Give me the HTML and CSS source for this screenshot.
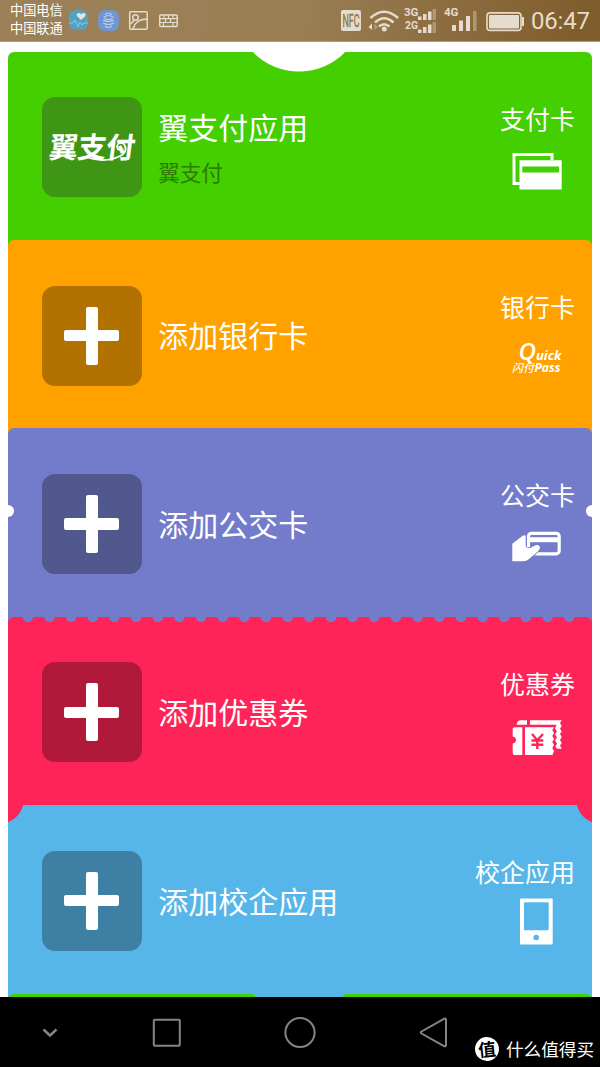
FILE: index.html
```html
<!DOCTYPE html>
<html lang="zh-CN">
<head>
    <meta charset="UTF-8">
    <meta name="viewport" content="width=device-width, initial-scale=1.0">
    <title>翼支付</title>
    <link rel="stylesheet" href="styles.css">
</head>
<body>
    <header class="status-bar">
        <div class="carriers">
            <span>中国电信</span>
            <span>中国联通</span>
        </div>
        <svg class="status-left" width="112" height="24" viewBox="0 0 112 24">
            <rect x="2" y="2" width="19" height="20" rx="7" fill="#51a3c4"/>
            <path d="M14 12 L10 8 Q9 5 12 5 Q14 5 14 6.500 Q15.500 4.500 17 5 Q20 6 17.500 9 Z" fill="#e9e5d8"/>
            <path d="M2 15 H6 L8 12 L11 19 L13 14 L15 17 L17 15 H21" fill="none" stroke="#93c4dd"/>
            <rect x="31" y="2" width="21" height="21" rx="7" fill="#7096d0"/>
            <path d="M38 6.500 Q41.500 4 45 6.500 M36.500 9.500 Q41.500 5.500 46.500 9.500 M36 12 Q41.500 15 47 12 M36 15 Q41.500 18 47 15 M38 18 Q41.500 21 45 18 M37.500 10.500 Q41.500 13 45.500 10.500" fill="none" stroke="#c1cce0" stroke-width="1.100"/>
            <g fill="none" stroke="#e5dccd" stroke-width="1.500">
                <rect x="62.700" y="3.700" width="17.500" height="17.500" rx="1"/>
                <circle cx="68.500" cy="9.500" r="2.800"/>
                <path d="M66 21 Q68 11.500 80 11 M67.500 12 L63.500 16"/>
                <rect x="92.700" y="7" width="17.500" height="11.500" rx="1"/>
                <path d="M93 10.700 H110 M93 14.500 H110 M97 7 V10.500 M101.500 7 V10.500 M106 7 V10.500 M98.500 11 V14 M103.500 11 V14 M96.500 15 V18 M106 15 V18" stroke-width="1.200"/>
            </g>
        </svg>
        <svg class="status-right" width="184" height="34" viewBox="0 0 184 34">
            <rect x="0" y="6" width="20" height="21" rx="2" fill="#e5dccd"/>
            <text class="nfc" x="1.500" y="22.500" textLength="17" lengthAdjust="spacingAndGlyphs">NFC</text>
            <g fill="none" stroke="#e5dccd" stroke-width="2.600">
                <path d="M29.500 14 Q43 1.500 57 14 M34 18.500 Q43 10 52.500 18.500 M38 22.500 Q43 18 48.500 22.500"/>
            </g>
            <circle cx="43.300" cy="25" r="2.500" fill="#e5dccd"/>
            <path d="M31 19.500 V26 L27.500 23 Z" fill="#e5dccd"/>
            <path d="M33.500 20 L37 23 L33.500 26 Z" fill="#b6a283"/>
            <g fill="#e5dccd">
                <text class="net" x="63" y="12">3G</text>
                <text class="net" x="64" y="25" textLength="13" lengthAdjust="spacingAndGlyphs">2G</text>
                <path d="M77 12.500h3.500v3.500h-3.500z M82 10h3.500v6h-3.500z M87 7.500h3.500v8.500h-3.500z M77 25.500h3.500v3.500h-3.500z M82 23h3.500v6h-3.500z M87 20.500h3.500v8.500h-3.500z"/>
                <text class="net" x="103" y="12">4G</text>
                <path d="M111 21h4v6h-4z M118 16.500h4v10.500h-4z M125 12h4v15h-4z"/>
            </g>
            <path d="M91.500 5h3.500v11h-3.500z M91.500 18h3.500v11h-3.500z M132 7h3.500v20h-3.500z" fill="#b09774"/>
            <rect x="146" y="8.900" width="34" height="17.500" rx="3" fill="none" stroke="#e5dccd" stroke-width="1.600"/>
            <rect x="148" y="11" width="30" height="13.500" rx="1" fill="#e5dccd"/>
            <path d="M181 13h2v9h-2z" fill="#e5dccd"/>
        </svg>
        <time class="clock">06:47</time>
    </header>

    <main class="wallet">
        <section class="card card-pay">
            <div class="tile">
                <svg class="brand" width="100" height="100" viewBox="0 0 100 100">
                    <g transform="translate(6 61) skewX(-7)">
                        <text x="0" y="0" textLength="86">翼支付</text>
                    </g>
                    <path d="M44 60 Q64 67 80 58 Q86 53 82 47 Q77 44 75 49 Q75 54 79 52" fill="none" stroke="#fff" stroke-width="1.800"/>
                </svg>
            </div>
            <div class="info">
                <h2>翼支付应用</h2>
                <p>翼支付</p>
            </div>
            <div class="kind">
                <span>支付卡</span>
                <svg width="50" height="50" viewBox="0 0 50 50">
                    <path d="M8 39.500 H2 V10.500 H40 V16" fill="none" stroke="#fff" stroke-width="3"/>
                    <path d="M7.500 16.200 H49.700 V45.500 H7.500 Z M10.300 22.500 V28.500 H47 V22.500 Z" fill="#fff" fill-rule="evenodd"/>
                </svg>
            </div>
        </section>

        <section class="card card-bank">
            <div class="tile plus"></div>
            <div class="info">
                <h2>添加银行卡</h2>
            </div>
            <div class="kind">
                <span>银行卡</span>
                <svg class="quick" width="50" height="50" viewBox="0 0 50 50">
                    <text x="6.500" y="28" textLength="43" lengthAdjust="spacingAndGlyphs"><tspan class="quick-q">Q</tspan>uick</text>
                    <text x="0" y="39.700"><tspan class="quick-cn">闪付</tspan><tspan x="22.500" textLength="26" lengthAdjust="spacingAndGlyphs">Pass</tspan></text>
                </svg>
            </div>
        </section>

        <section class="card card-bus">
            <div class="tile plus"></div>
            <div class="info">
                <h2>添加公交卡</h2>
            </div>
            <div class="kind">
                <span>公交卡</span>
                <svg width="50" height="50" viewBox="0 0 50 50">
                    <rect x="16.500" y="13.300" width="30.700" height="20.500" rx="3" fill="none" stroke="#fff" stroke-width="3.200"/>
                    <path d="M16 17.200 H48 V22.200 H16 Z" fill="#fff"/>
                    <path d="M.3 23.800 L11 15.500 H13.700 V26 Q14 28.500 18 28 L24 25 Q28 24.500 28 28 Q27 31 23 34 L17 39 Q14.500 41.200 11 41.200 H.3 Z" fill="#fff" stroke="#727ccb" stroke-width="1.800" paint-order="stroke"/>
                </svg>
            </div>
        </section>

        <section class="card card-coupon">
            <div class="tile plus"></div>
            <div class="info">
                <h2>添加优惠券</h2>
            </div>
            <div class="kind">
                <span>优惠券</span>
                <svg width="50" height="50" viewBox="0 0 50 50">
                    <g fill="#fff">
                        <path d="M4.700 15.700 Q5 11.300 9 11.300 H15 V15.700 Z"/>
                        <path d="M18 11.300 H49.700 L48 14 L49.700 17 L48 19.500 L49.700 22.500 L48 25 L49.700 28 L48 31 L49.700 34 L48 36.500 L49.700 39.700 H45 L43.500 37.500 L45 34.500 L43 31.500 L45 28.500 L43 25.500 L45 22.500 L43 19.500 L44.500 15.700 H18 Z"/>
                        <path d="M2.500 18.300 H10.300 V46 H2.500 Q.7 46 .7 44 V34.500 Q4 34 4 31 Q4 28 .7 27.500 V20 Q.7 18.300 2.500 18.300 Z"/>
                        <path d="M13 18.300 H42 L40.300 21 L42 24 L40.300 27 L42 30 L40.300 33 L42 36 L40.300 39 L42 42 L40.500 46 H13 Z"/>
                    </g>
                    <path d="M20 25 L25.300 31.300 L31 25 M25.300 31 V40 M19.500 31.500 H31.300 M19.500 35.800 H31.300" fill="none" stroke="#ff2457" stroke-width="2.400"/>
                </svg>
            </div>
        </section>

        <section class="card card-campus">
            <div class="tile plus"></div>
            <div class="info">
                <h2>添加校企应用</h2>
            </div>
            <div class="kind">
                <span>校企应用</span>
                <svg width="50" height="50" viewBox="0 0 50 50">
                    <rect x="8" y="1.500" width="32.700" height="46" rx="1" fill="#fff"/>
                    <rect x="12" y="5.200" width="24.700" height="28" rx="1" fill="#57b6e9"/>
                    <circle cx="24.200" cy="40.500" r="2.800" fill="#57b6e9"/>
                </svg>
            </div>
        </section>

        <section class="card card-next"></section>
    </main>

    <nav class="nav-bar">
        <svg width="460" height="70" viewBox="0 0 460 70" fill="none" stroke="#858585" stroke-width="2">
            <path d="M43.500 32.500 L50 38.500 L56.500 32.500" stroke-width="2.400"/>
            <rect x="153.800" y="22.800" width="26" height="26" rx="1"/>
            <circle cx="300" cy="35.500" r="14.600"/>
            <path d="M444 21.800 Q446 20.800 446 23 V48 Q446 50 444 49 L421.500 36.500 Q420 35.500 421.500 34.500 Z"/>
        </svg>
        <div class="watermark">
            <span class="seal">值</span>
            <span>什么值得买</span>
        </div>
    </nav>
</body>
</html>
```

FILE: styles.css
```css
* {
    box-sizing: border-box;
}
body {
    margin: 0;
    width: 600px;
    height: 1067px;
    overflow: hidden;
    display: flex;
    flex-direction: column;
    background: #fff;
    color: #fff;
    font-family: "Noto Sans CJK SC", sans-serif;
}

/* 状态栏 */
.status-bar {
    flex: none;
    height: 42px;
    display: flex;
    align-items: flex-start;
    padding-left: 10px;
    background: linear-gradient(100deg, #9c8057 0%, #9a7e54 50%, #805d2d 96%);
    border-bottom: 1px solid #b49b78;
}
.carriers {
    width: 57px;
    padding-top: 1px;
    display: flex;
    flex-direction: column;
    font-size: 13.2px;
    line-height: 18px;
    white-space: nowrap;
}
.status-left {
    margin-top: 8px;
}
.status-right {
    margin-top: 4px;
    margin-left: 162px;
}
.nfc {
    font: 18px "Roboto", sans-serif;
    fill: #8f7146;
    stroke: #8f7146;
    stroke-width: .4;
}
.net {
    font: bold 11.5px "Roboto", sans-serif;
}
.clock {
    margin-left: 6px;
    color: #e5dccd;
    font: 24px/43px "Roboto", sans-serif;
    letter-spacing: -.2px;
}

/* 卡片 */
.wallet {
    flex: none;
    height: 955px;
    padding: 9.5px 8.4px 0 8.4px;
    overflow: hidden;
}
.card {
    position: relative;
    height: 200px;
    margin-bottom: -11.6px;
    padding-left: 33.4px;
    display: flex;
    border-radius: 6px 6px 0 0;
}
.card-pay {
    background: radial-gradient(circle at 291px -45px, #fff 64px, #43cf00 65px);
}
.card-bank {
    background: #ffa200;
}
.card-bus {
    background: #727ccb;
}
.card-coupon {
    background: #ff2457;
}
.card-campus {
    border-radius: 0;
    background:
        radial-gradient(circle at -9px -6px, #ff2457 24.5px, transparent 25.2px),
        radial-gradient(circle at calc(100% + 9px) -6px, #ff2457 24.5px, #57b6e9 25.2px);
}
.card-next {
    background: radial-gradient(circle at 291px -45px, #57b6e9 64px, #43cf00 65px);
}

/* 公交卡两侧的圆孔 */
.card-bus::before,
.card-bus::after {
    content: "";
    position: absolute;
    top: 77px;
    width: 12px;
    height: 12px;
    border-radius: 50%;
    background: #fff;
}
.card-bus::before {
    left: -6px;
}
.card-bus::after {
    right: -6px;
}

/* 优惠券的齿孔 */
.card-coupon::before {
    content: "";
    position: absolute;
    top: 0;
    left: 9px;
    width: 563.5px;
    height: 6px;
    background: radial-gradient(circle at 50% 0, #727ccb 4.8px, transparent 5.5px) 0 0 / 21.67px 6px repeat-x;
}

.tile {
    flex: none;
    width: 100px;
    height: 100px;
    margin-top: 45.6px;
    border-radius: 13px;
    display: flex;
    align-items: center;
    justify-content: center;
    background: #3e9614;
}
.card-bank .tile {
    background: #b37200;
}
.card-bus .tile {
    background: #50588e;
}
.card-coupon .tile {
    background: #b1193b;
}
.card-campus .tile {
    background: #3d80a4;
}
.plus {
    display: grid;
}
.plus::before,
.plus::after {
    content: "";
    grid-area: 1 / 1;
    place-self: center;
    border-radius: 2px;
    background: #fff;
}
.plus::before {
    width: 55px;
    height: 11.5px;
}
.plus::after {
    width: 11.5px;
    height: 58px;
}
.brand {
    fill: #fff;
    font-size: 29px;
    font-weight: 700;
}
.info {
    padding: 72.5px 0 0 16.4px;
}
.info h2 {
    margin: 0;
    font-size: 30px;
    font-weight: 400;
    line-height: 44px;
}
.card-pay .info {
    padding-top: 52px;
}
.info p {
    margin: 8px 0 0;
    color: #2c7c04;
    font-size: 21.6px;
    line-height: 32px;
}
.kind {
    margin-left: auto;
    padding: 48px 16.6px 0 0;
    display: flex;
    flex-direction: column;
    align-items: flex-end;
    font-size: 25px;
    line-height: 36px;
}
.kind svg {
    margin: 8px 13px 0 0;
    overflow: visible;
}
.quick {
    fill: #fff;
    font: italic 700 12.5px "Open Sans", sans-serif;
}
.quick-q {
    font-size: 23px;
    font-weight: 600;
}
.quick-cn {
    font: italic 500 11px "Noto Sans CJK SC", sans-serif;
}

/* 导航栏 */
.nav-bar {
    flex: none;
    height: 70px;
    display: flex;
    background: #000;
}
.watermark {
    display: flex;
    align-items: center;
    gap: 7px;
    height: 35px;
    margin: 34px 0 0 15px;
    font-size: 17.6px;
    white-space: nowrap;
}
.seal {
    width: 24px;
    height: 24px;
    border-radius: 50%;
    background: #fff;
    color: #000;
    font-weight: 700;
    line-height: 23px;
    text-align: center;
    transform: rotate(-6deg);
}
```
